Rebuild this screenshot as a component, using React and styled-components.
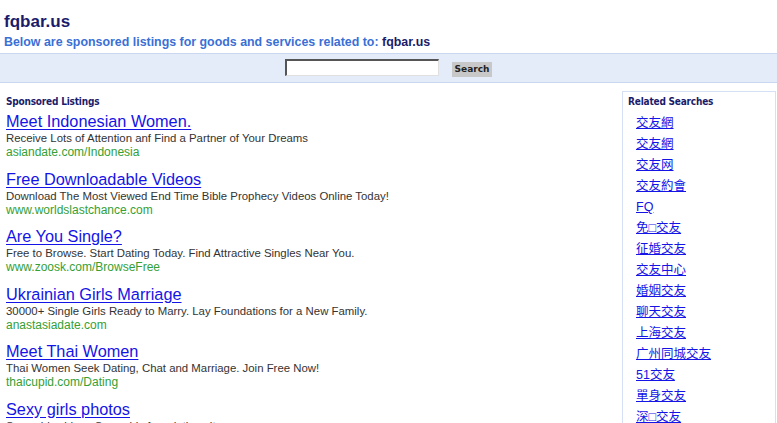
import React from "react";
import styled, { createGlobalStyle } from "styled-components";

const Global = createGlobalStyle`
  html, body { margin: 0; padding: 0; background: #fff; }
  body { font-family: "Liberation Sans", Arial, sans-serif; }
`;

const Page = styled.div`
  width: 777px;
  overflow: hidden;
`;

const Header = styled.header`
  padding: 12px 0 0 4px;
  height: 41px;
  box-sizing: border-box;
`;

const SiteTitle = styled.h1`
  margin: 0 0 2px;
  font-size: 17px;
  line-height: 20px;
  font-weight: bold;
  color: #1b1b6b;
  font-family: "Liberation Sans", Arial, sans-serif;
`;

const Subtitle = styled.div`
  font-size: 12.4px;
  line-height: 16px;
  font-weight: bold;
  color: #3a6fd6;
  white-space: nowrap;
  b { color: #1b1b6b; }
`;

const SearchBand = styled.form`
  margin-top: 12px;
  height: 28px;
  background: #e5ecf9;
  border-top: 1px solid #c9d7f1;
  border-bottom: 1px solid #c9d7f1;
  display: flex;
  justify-content: center;
  align-items: flex-start;
  gap: 13px;
`;

const SearchInput = styled.input`
  margin-top: 5px;
  width: 154px;
  height: 17px;
  box-sizing: border-box;
  border-top: 2px solid #555;
  border-left: 2px solid #555;
  border-right: 1px solid #e0e0e0;
  border-bottom: 1px solid #e0e0e0;
  background: #fff;
  padding: 0;
`;

const SearchButton = styled.button`
  margin-top: 8px;
  width: 40px;
  height: 15px;
  padding: 0;
  border: none;
  background: #c8c8c8;
  color: #222;
  font-family: "DejaVu Sans", Verdana, sans-serif;
  font-size: 9px;
  font-weight: bold;
  line-height: 15px;
`;

const Main = styled.div`
  margin-top: 8px;
  display: flex;
  align-items: flex-start;
`;

const Listings = styled.section`
  flex: 1;
  padding: 4px 0 0 6px;
`;

const SectionLabel = styled.div`
  font-family: "DejaVu Sans Condensed", "DejaVu Sans", Tahoma, sans-serif;
  font-stretch: condensed;
  font-size: 10px;
  line-height: 14px;
  font-weight: bold;
  color: #1b1b6b;
  letter-spacing: -0.2px;
`;

const ListingsLabel = styled(SectionLabel)`
  margin-bottom: 3px;
`;

const Ad = styled.article`
  padding-bottom: 10.5px;
`;

const AdTitle = styled.a`
  display: block;
  width: fit-content;
  font-size: 16.3px;
  line-height: 19px;
  color: #1414e6;
  text-decoration: underline;
  text-underline-offset: 2px;
`;

const AdDesc = styled.div`
  font-size: 11.4px;
  line-height: 14px;
  color: #333;
  white-space: nowrap;
`;

const AdUrl = styled.div`
  font-size: 12px;
  line-height: 14px;
  color: #35a035;
`;

const Sidebar = styled.aside`
  width: 154px;
  margin-right: 1px;
  box-sizing: border-box;
  border: 1px solid #d5e0f5;
  border-bottom: none;
  padding: 3px 0 0 5px;
  min-height: 340px;
`;

const SidebarLabel = styled(SectionLabel)`
  margin-bottom: 2px;
`;

const RelatedList = styled.ul`
  list-style: none;
  margin: 0;
  padding: 0 0 0 8px;
`;

const RelatedItem = styled.li`
  height: 21px;
  line-height: 21px;
  a {
    font-family: "Liberation Sans", Arial, "Noto Sans CJK SC", sans-serif;
    font-size: 12.5px;
    color: #1414e6;
    text-decoration: underline;
  }
`;

const ads = [
  {
    t: "Meet Indonesian Women.",
    d: "Receive Lots of Attention anf Find a Partner of Your Dreams",
    u: "asiandate.com/Indonesia",
  },
  {
    t: "Free Downloadable Videos",
    d: "Download The Most Viewed End Time Bible Prophecy Videos Online Today!",
    u: "www.worldslastchance.com",
  },
  {
    t: "Are You Single?",
    d: "Free to Browse. Start Dating Today. Find Attractive Singles Near You.",
    u: "www.zoosk.com/BrowseFree",
  },
  {
    t: "Ukrainian Girls Marriage",
    d: "30000+ Single Girls Ready to Marry. Lay Foundations for a New Family.",
    u: "anastasiadate.com",
  },
  {
    t: "Meet Thai Women",
    d: "Thai Women Seek Dating, Chat and Marriage. Join Free Now!",
    u: "thaicupid.com/Dating",
  },
  {
    t: "Sexy girls photos",
    d: "Sexy girls videos Sexy girls free dating sites",
    u: "",
  },
];

const related = [
  "交友網",
  "交友網",
  "交友网",
  "交友約會",
  "FQ",
  "免□交友",
  "征婚交友",
  "交友中心",
  "婚姻交友",
  "聊天交友",
  "上海交友",
  "广州同城交友",
  "51交友",
  "單身交友",
  "深□交友",
];

export default function App() {
  return (
    <Page>
      <Global />
      <Header>
        <SiteTitle>fqbar.us</SiteTitle>
        <Subtitle>
          Below are sponsored listings for goods and services related to: <b>fqbar.us</b>
        </Subtitle>
      </Header>
      <SearchBand onSubmit={(e) => e.preventDefault()}>
        <SearchInput type="text" />
        <SearchButton type="submit">Search</SearchButton>
      </SearchBand>
      <Main>
        <Listings>
          <ListingsLabel>Sponsored Listings</ListingsLabel>
          {ads.map((a, i) => (
            <Ad key={i}>
              <AdTitle href="#">{a.t}</AdTitle>
              <AdDesc>{a.d}</AdDesc>
              {a.u && <AdUrl>{a.u}</AdUrl>}
            </Ad>
          ))}
        </Listings>
        <Sidebar>
          <SidebarLabel>Related Searches</SidebarLabel>
          <RelatedList>
            {related.map((r, i) => (
              <RelatedItem key={i}>
                <a href="#">{r}</a>
              </RelatedItem>
            ))}
          </RelatedList>
        </Sidebar>
      </Main>
    </Page>
  );
}
